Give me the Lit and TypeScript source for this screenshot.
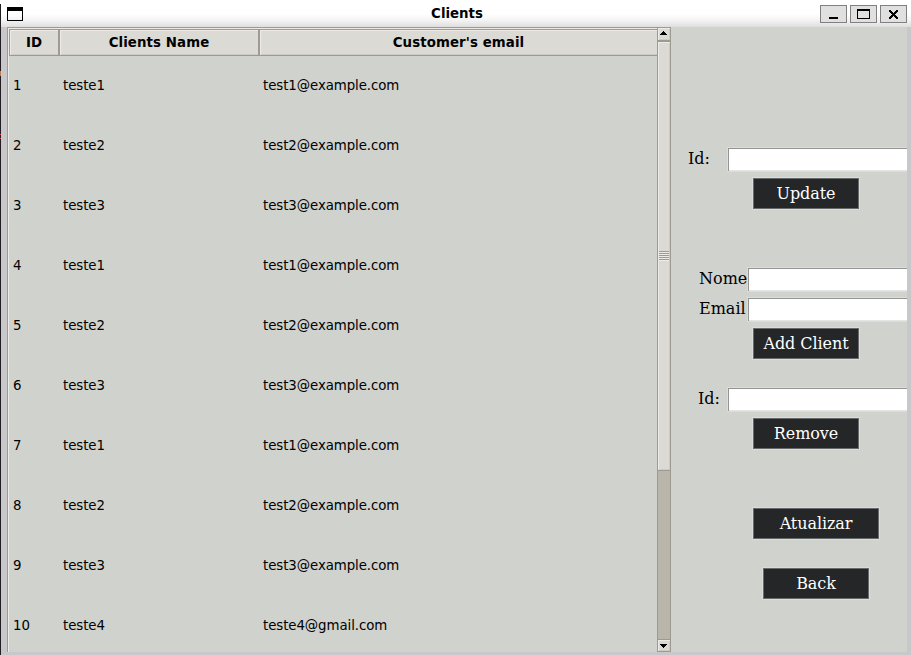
import { LitElement, html, svg, css } from "lit";
import { customElement } from "lit/decorators.js";

const rows = [
  ["1", "teste1", "test1@example.com"],
  ["2", "teste2", "test2@example.com"],
  ["3", "teste3", "test3@example.com"],
  ["4", "teste1", "test1@example.com"],
  ["5", "teste2", "test2@example.com"],
  ["6", "teste3", "test3@example.com"],
  ["7", "teste1", "test1@example.com"],
  ["8", "teste2", "test2@example.com"],
  ["9", "teste3", "test3@example.com"],
  ["10", "teste4", "teste4@gmail.com"],
];

@customElement("window-bar")
class WindowBar extends LitElement {
  static styles = css`
    :host {
      display: flex;
      align-items: flex-start;
      height: 27px;
      box-sizing: border-box;
      padding: 5px 4px 0 6px;
      border-radius: 6px 6px 0 0;
      background: linear-gradient(#fff 0, #fff 14px, #f4f4f4 20px, #dedede 27px);
      font: bold 13.33px/16px "DejaVu Sans", sans-serif;
      color: #000;
    }
    .menu { width: 16px; height: 14px; margin-top: 2px; }
    .title { flex: 1; text-align: center; padding: 1px 0 0 71px; }
    .controls { display: flex; gap: 3px; }
    .control {
      width: 27px;
      height: 18px;
      box-sizing: border-box;
      border: 1px solid #808080;
      background: #e0e0e0;
    }
    svg { display: block; shape-rendering: crispEdges; }
  `;
  render() {
    return html`
      <svg class="menu" viewBox="0 0 16 14">
        <path d="M0 0H16V14H0ZM1 4V13H15V4Z" fill-rule="evenodd" />
      </svg>
      <div class="title">Clients</div>
      <div class="controls">
        ${[
          svg`<path d="M8 11H17V13H8Z"/>`,
          svg`<path d="M6 3H19V13H6ZM7 5V12H18V5Z" fill-rule="evenodd"/>`,
          svg`<path d="M8 4H10V5H11V6H12V7H13V6H14V5H15V4H17V6H16V7H15V8H14V9H15V10H16V11H17V13H15V12H14V11H13V10H12V11H11V12H10V13H8V11H9V10H10V9H11V8H10V7H9V6H8Z"/>`,
        ].map(
          (glyph) => html`<div class="control"><svg width="25" height="16" viewBox="0 0 25 16">${glyph}</svg></div>`
        )}
      </div>
    `;
  }
}

@customElement("client-table")
class ClientTable extends LitElement {
  static styles = css`
    :host {
      display: block;
      box-sizing: border-box;
      border-left: 1px solid #9e9a91;
      border-top: 1px solid #9e9a91;
      overflow: hidden;
      font: 13.33px/16px "DejaVu Sans", sans-serif;
      letter-spacing: -0.07px;
      color: #000;
    }
    .inner { border-left: 1px solid #eeebe7; border-top: 1px solid #eeebe7; }
    .row { display: grid; grid-template-columns: 50px 200px 1fr; height: 60px; align-items: center; }
    .row span { padding-left: 4px; }
    .head { height: 27px; align-items: stretch; font-weight: bold; text-align: center; letter-spacing: 0.1px; }
    .head div {
      box-sizing: border-box;
      border: 1px solid #9e9a91;
      box-shadow: inset 1px 1px #eeebe7, inset 0 -1px #cfcbc4;
      background: #dcdad5;
      line-height: 25px;
    }
    .head div:last-child { border-right: 0; }
  `;
  render() {
    return html`<div class="inner">
      <div class="row head"><div>ID</div><div>Clients Name</div><div>Customer's email</div></div>
      ${rows.map((r) => html`<div class="row">${r.map((c) => html`<span>${c}</span>`)}</div>`)}
    </div>`;
  }
}

@customElement("scroll-bar")
class ScrollBar extends LitElement {
  static styles = css`
    :host {
      display: flex;
      flex-direction: column;
      box-sizing: border-box;
      border: 1px solid #9e9a91;
      background: #bab5ab;
    }
    .arrow { height: 12px; background: #dcdad5; box-shadow: inset 1px 1px #eeebe7, inset -1px -1px #cfcbc4; }
    .up { border-bottom: 1px solid #9e9a91; }
    .down { border-top: 1px solid #9e9a91; margin-top: auto; height: 11px; }
    .thumb {
      height: 428px;
      display: flex;
      align-items: center;
      border-top: 1px solid #9e9a91;
      border-bottom: 1px solid #9e9a91;
      background: #dcdad5;
      box-shadow: inset 1px 1px #eeebe7, inset -1px -1px #cfcbc4;
    }
    .grip {
      height: 10px;
      width: 10px;
      margin: 0 1px;
      background: repeating-linear-gradient(#9e9a91 0 1px, #eeebe7 1px 2px);
    }
    svg { display: block; shape-rendering: crispEdges; }
  `;
  render() {
    return html`
      <div class="arrow up"><svg width="12" height="12"><path d="M5 3H6V4H7V5H8V6H9V7H2V6H3V5H4V4H5Z" /></svg></div>
      <div class="thumb"><div class="grip"></div></div>
      <div class="arrow down"><svg width="12" height="11"><path d="M2 4H9V5H8V6H7V7H6V8H5V7H4V6H3V5H2Z" /></svg></div>
    `;
  }
}

@customElement("client-form")
class ClientForm extends LitElement {
  static styles = css`
    :host {
      display: flex;
      flex-direction: column;
      box-sizing: border-box;
      padding-top: 120px;
      overflow: hidden;
      font: 16px/20px "DejaVu Serif", serif;
      color: #000;
    }
    .field { display: flex; height: 25px; margin-bottom: 5px; flex: none; }
    .label { width: 56px; box-sizing: border-box; padding: 2px 0 0 17px; white-space: nowrap; }
    .wide .label { width: 76px; padding-left: 28px; }
    .remove .label { padding-left: 27px; }
    .entry {
      flex: 1;
      box-sizing: border-box;
      border: 1px solid #dcdddb;
      border-right: 0;
      background: #fff;
      box-shadow: inset 1px 1px #949494, inset 0 -1px #e4e4e4;
    }
    .button {
      width: 108px;
      height: 33px;
      flex: none;
      box-sizing: border-box;
      margin: 0 0 0 81px;
      border: 1px solid #dadcd9;
      background: #252628;
      box-shadow: inset 0 0 0 1px #67696b;
      color: #fff;
      text-align: center;
      line-height: 31px;
      letter-spacing: -0.08px;
    }
    .update { margin-bottom: 57px; }
    .add { margin-bottom: 27px; }
    .remove-button { margin-bottom: 57px; }
    .refresh { width: 128px; margin-bottom: 27px; }
    .back { margin-left: 91px; }
  `;
  render() {
    return html`
      <div class="field"><div class="label">Id:</div><div class="entry"></div></div>
      <div class="button update">Update</div>
      <div class="field wide"><div class="label">Nome</div><div class="entry"></div></div>
      <div class="field wide"><div class="label">Email</div><div class="entry"></div></div>
      <div class="button add">Add Client</div>
      <div class="field remove"><div class="label">Id:</div><div class="entry"></div></div>
      <div class="button remove-button">Remove</div>
      <div class="button refresh">Atualizar</div>
      <div class="button back">Back</div>
    `;
  }
}

@customElement("app-root")
class AppRoot extends LitElement {
  static styles = css`
    :host {
      display: block;
      width: 911px;
      height: 655px;
      box-sizing: border-box;
      padding-left: 1px;
      overflow: hidden;
      background: linear-gradient(#fff 0 4px, #211d22 4px 71px, #c87a45 71px 76px, #211d22 76px 134px, #c0504d 134px 135px, #211d22 135px 138px, #c0504d 138px 139px, #211d22 139px) 0 0 / 1px 100% no-repeat, #fff;
    }
    .body {
      display: grid;
      grid-template-columns: 650px 14px 236px;
      height: 628px;
      box-sizing: border-box;
      padding: 0 4px 3px 6px;
      background: #c8c8ca;
    }
    .body > * { min-height: 0; min-width: 0; background-color: #d0d2cd; }
    .body > scroll-bar { background-color: #bab5ab; }
  `;
  render() {
    return html`
      <window-bar></window-bar>
      <div class="body">
        <client-table></client-table>
        <scroll-bar></scroll-bar>
        <client-form></client-form>
      </div>
    `;
  }
}
